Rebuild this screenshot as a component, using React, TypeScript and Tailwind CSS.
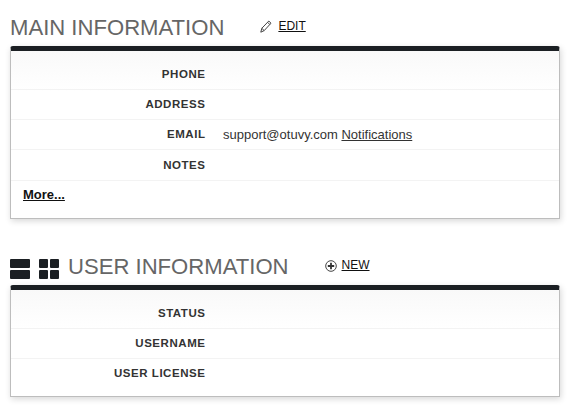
import type { ReactNode } from 'react'

function Row({ label, last, children }: { label: string; last?: boolean; children?: ReactNode }) {
  return (
    <div className={last ? 'flex h-[29.4px] items-center' : 'flex h-[30.3px] items-center border-b border-[#f3f3f3]'}>
      <div className="w-[194.5px] text-right text-[11.5px] font-bold tracking-[0.55px] text-[#333]">{label}</div>
      <div className="ml-[17.5px] text-[13px] text-[#333]">{children}</div>
    </div>
  )
}

function Card({ children }: { children: ReactNode }) {
  return (
    <div className="rounded-t-[3px] border-x border-b border-[#bdbdbd] border-t-[5px] border-t-[#1b1f23] bg-gradient-to-b from-[#f9f9f9] to-white to-[40px] pt-[8.6px] shadow-[1px_2px_6px_rgba(0,0,0,0.16)]">
      {children}
    </div>
  )
}

export default function App() {
  return (
    <div className="h-[408px] w-[570px] overflow-hidden bg-white px-[10px] font-['Liberation_Sans',Arial,sans-serif]">
      <div className="flex h-[46px] items-end">
        <h2 className="mb-[5px] text-[22.1px] leading-[26px] text-[#666]">MAIN INFORMATION</h2>
        <svg className="mb-[13px] ml-[36px] h-[13px] w-[12px]" viewBox="0 0 12 13" fill="none" stroke="#444" strokeWidth="1">
          <path d="M0.8 12.2 L1.8 8.3 L8.8 1 L11 3.2 L4.2 10.6 Z M1.8 8.3 L4.2 10.6 M7.6 2.3 L9.8 4.5" />
        </svg>
        <a className="mb-[13px] ml-[6px] text-[12px] leading-[14px] text-[#111] underline">EDIT</a>
      </div>
      <Card>
        <Row label="PHONE" />
        <Row label="ADDRESS" />
        <Row label="EMAIL">
          support@otuvy.com <a className="underline">Notifications</a>
        </Row>
        <Row label="NOTES" />
        <div className="flex h-[37.2px] items-start pl-[12px] pt-[4.5px]">
          <a className="text-[13px] font-bold text-[#111] underline">More...</a>
        </div>
      </Card>
      <div className="mt-[32px] flex h-[34px] items-end">
        <svg className="mb-[6px] h-[20px] w-[20px]" viewBox="0 0 20 20" fill="#1b1f23">
          <rect x="0" y="0" width="20" height="9" rx="1" />
          <rect x="0" y="11" width="20" height="9" rx="1" />
        </svg>
        <svg className="mb-[6px] ml-[9px] h-[20px] w-[20px]" viewBox="0 0 20 20" fill="#1b1f23">
          <rect x="0" y="0" width="9" height="9" rx="1" />
          <rect x="11" y="0" width="9" height="9" rx="1" />
          <rect x="0" y="11" width="9" height="9" rx="1" />
          <rect x="11" y="11" width="9" height="9" rx="1" />
        </svg>
        <h2 className="mb-[5px] ml-[9px] text-[22.1px] leading-[26px] text-[#666]">USER INFORMATION</h2>
        <svg className="mb-[13px] ml-[36px] h-[12px] w-[12px]" viewBox="0 0 12 12" fill="none">
          <circle cx="6" cy="6" r="5.3" stroke="#444" />
          <path d="M6 2.8v6.4M2.8 6h6.4" stroke="#333" strokeWidth="1.8" />
        </svg>
        <a className="mb-[13px] ml-[5px] text-[12px] leading-[14px] text-[#111] underline">NEW</a>
      </div>
      <Card>
        <Row label="STATUS" />
        <Row label="USERNAME" />
        <Row label="USER LICENSE" last />
        <div className="h-[7.4px]" />
      </Card>
    </div>
  )
}
